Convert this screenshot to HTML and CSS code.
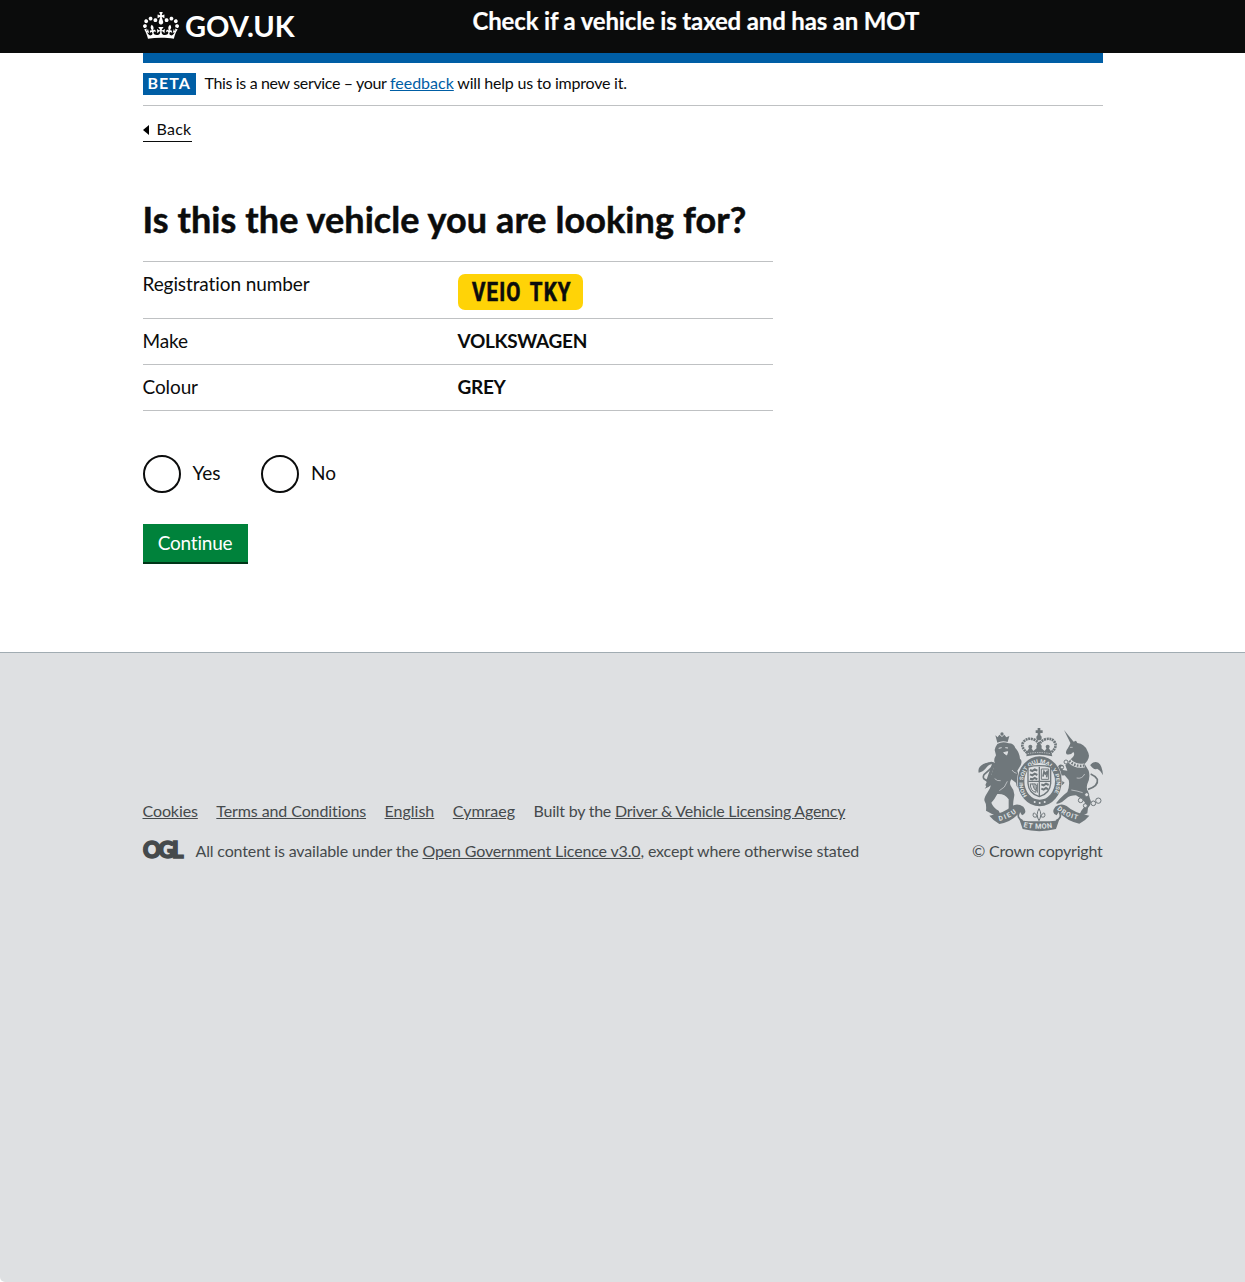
FILE: index.html
```html
<!DOCTYPE html>
<html lang="en">
<head>
<meta charset="utf-8">
<title>Check if a vehicle is taxed and has an MOT</title>
<link rel="stylesheet" href="styles.css">
</head>
<body>
<header class="header">
  <div class="container header-inner">
    <a class="logo" href="#">
      <svg class="logo-crown" viewBox="0 0 132 97" preserveAspectRatio="none" aria-hidden="true"><path fill="currentColor" fill-rule="evenodd" d="M25 30.2c3.5 1.5 7.7-.2 9.1-3.7 1.5-3.6-.2-7.8-3.9-9.2-3.6-1.4-7.6.3-9.1 3.9-1.4 3.5.3 7.5 3.9 9zM9 39.5c3.6 1.5 7.8-.2 9.2-3.7 1.5-3.6-.2-7.8-3.9-9.1-3.6-1.5-7.6.2-9.1 3.8-1.4 3.5.3 7.5 3.8 9zM4.4 57.2c3.5 1.5 7.7-.2 9.1-3.8 1.5-3.6-.2-7.7-3.9-9.1-3.5-1.5-7.6.3-9.1 3.8-1.4 3.5.3 7.6 3.9 9.1zm38.3-21.4c3.5 1.5 7.7-.2 9.1-3.8 1.5-3.6-.2-7.7-3.9-9.1-3.6-1.5-7.6.3-9.1 3.8-1.3 3.6.4 7.7 3.9 9.1zm64.4-5.6c-3.6 1.5-7.8-.2-9.1-3.7-1.5-3.6.2-7.8 3.8-9.2 3.6-1.4 7.7.3 9.2 3.9 1.3 3.5-.4 7.5-3.9 9zm15.9 9.3c-3.6 1.5-7.7-.2-9.1-3.7-1.5-3.6.2-7.8 3.7-9.1 3.6-1.5 7.7.2 9.2 3.8 1.5 3.5-.3 7.5-3.8 9zm4.7 17.7c-3.6 1.5-7.8-.2-9.2-3.8-1.5-3.6.2-7.7 3.9-9.1 3.6-1.5 7.7.3 9.2 3.8 1.3 3.5-.4 7.6-3.9 9.1zM89.3 35.8c-3.6 1.5-7.8-.2-9.2-3.8-1.4-3.6.2-7.7 3.9-9.1 3.6-1.5 7.7.3 9.2 3.8 1.4 3.6-.3 7.7-3.9 9.1zM69.7 17.7l8.9 4.7V9.3l-8.9 2.8c-.2-.3-.5-.6-.9-.9L72.4 0H59.6l3.5 11.2c-.3.3-.6.5-.9.9l-8.8-2.8v13.1l8.8-4.7c.3.3.6.7.9.9l-5 15.4v.1c-.2.8-.4 1.6-.4 2.4 0 4.1 3.1 7.5 7 8.1h.2c.3 0 .7.1 1 .1.4 0 .7 0 1-.1h.2c4-.6 7.1-4.1 7.1-8.1 0-.8-.1-1.7-.4-2.4V34l-5.1-15.4c.4-.2.7-.6 1-.9zM66 92.8c16.9 0 32.8 1.1 47.1 3.2 4-16.9 8.9-26.7 14-33.5l-9.6-3.4c1 4.9 1.1 7.2 0 10.2-1.5-1.4-3-4.3-4.2-8.7L108.6 76c2.8-2 5-3.2 7.5-3.3-4.4 9.4-10 11.9-13.6 11.2-4.3-.8-6.3-4.6-5.6-7.9 1-4.7 5.7-5.9 8-.5 4.3-8.7-3-11.4-7.6-8.8 7.1-7.2 7.9-13.5 2.1-21.1-8 6.1-8.1 12.3-4.5 20.8-4.7-5.4-12.1-2.5-9.5 6.2 3.4-5.2 7.9-2 7.2 3.1-.6 4.3-6.4 7.8-13.5 7.2-10.3-.9-10.9-8-11.2-13.8 2.5-.5 7.1 1.8 11 7.3L80.2 60c-4.1 4.4-8 5.3-12.3 5.4 1.4-4.4 8-11.6 8-11.6H55.5s6.4 7.2 7.9 11.6c-4.2-.1-8-1-12.3-5.4l1.4 16.4c3.9-5.5 8.5-7.7 10.9-7.3-.3 5.8-.9 12.8-11.1 13.8-7.2.6-12.9-2.9-13.5-7.2-.7-5 3.8-8.3 7.1-3.1 2.7-8.7-4.6-11.6-9.4-6.2 3.7-8.5 3.6-14.7-4.6-20.8-5.8 7.6-5 13.9 2.2 21.1-4.7-2.6-11.9.1-7.7 8.8 2.3-5.5 7.1-4.2 8.1.5.7 3.3-1.3 7.1-5.7 7.9-3.5.7-9-1.8-13.5-11.2 2.5.1 4.7 1.3 7.5 3.3l-4.7-15.4c-1.2 4.4-2.7 7.2-4.3 8.7-1.1-3-.9-5.3 0-10.2l-9.5 3.4c5 6.9 9.9 16.7 14 33.5 14.8-2.1 30.8-3.2 47.7-3.2z"/></svg>
      <span class="logo-text">GOV.UK</span>
    </a>
    <a class="service-name" href="#">Check if a vehicle is taxed and has an MOT</a>
  </div>
</header>

<div class="container">
  <div class="header-bar"></div>
  <div class="phase-banner">
    <strong class="phase-tag">BETA</strong>
    <span class="phase-text">This is a new service – your <a class="feedback" href="#">feedback</a><span class="phase-end"> will help us to improve it.</span></span>
  </div>
  <a class="back-link" href="#"><svg class="back-arrow" viewBox="0 0 6 10" aria-hidden="true"><path d="M0 5L6 0V10Z"/></svg>Back</a>

  <main class="main">
    <h1 class="heading">Is this the vehicle you are looking for?</h1>
    <dl class="summary">
      <div class="row row-plate"><dt>Registration number</dt><dd><span class="plate"><span class="plate-text">VEIO TKY</span></span></dd></div>
      <div class="row"><dt>Make</dt><dd>VOLKSWAGEN</dd></div>
      <div class="row"><dt>Colour</dt><dd>GREY</dd></div>
    </dl>
    <form class="form">
      <div class="radios">
        <label class="radio"><input type="radio" name="correct"><span>Yes</span></label>
        <label class="radio"><input type="radio" name="correct"><span>No</span></label>
      </div>
      <button class="button" type="button">Continue</button>
    </form>
  </main>
</div>

<footer class="footer">
  <div class="container footer-inner">
    <div class="footer-meta">
      <ul class="footer-links">
        <li><a class="terms" href="#">Cookies</a></li>
        <li><a class="terms" href="#">Terms and Conditions</a></li>
        <li><a href="#">English</a></li>
        <li><a href="#">Cymraeg</a></li>
        <li class="built">Built by the <a href="#">Driver &amp; Vehicle Licensing Agency</a></li>
      </ul>
      <div class="licence">
        <span class="ogl">OGL</span>
        <span class="licence-text">All content is available under the <a href="#">Open Government Licence v3.0</a>, except where otherwise stated</span>
      </div>
    </div>
    <a class="copyright" href="#">
      <svg class="crest" viewBox="24 24 375 306" aria-hidden="true">
        <defs>
          <path id="garter" d="M171 228A50 60 0 1 1 247 228"/>
          <path id="dieu" d="M88 303Q122 296 152 267"/>
          <path id="mon" d="M160 321Q208 332 256 321"/>
          <path id="droit" d="M260 268Q290 296 334 301"/>
        </defs>
        <!-- lion -->
        <g fill="#6f777b">
          <path d="M76 46l7 6 5-8 8 7 7-7 6 8 9-4-5 18q-16-6-31 2z"/>
          <circle cx="96" cy="42" r="5"/>
          <path d="M82 72Q98 62 116 70Q132 70 136 84Q148 96 150 116Q158 122 152 136L142 152Q148 172 156 190Q158 206 148 204Q138 202 138 188L124 178Q116 190 124 200Q136 214 132 232Q128 252 130 262L138 270Q126 276 116 268L116 238Q104 220 82 222Q74 238 64 248Q70 264 86 272L92 284Q76 288 66 282L48 272Q50 252 44 244Q40 236 52 218Q62 204 62 196Q58 202 44 206Q52 198 46 196Q50 182 64 164Q70 150 74 128Q70 118 78 106L74 90Q76 80 82 72Z"/>
          <path d="M72 128L52 186M80 150L58 192" stroke="#6f777b" stroke-width="9"/>
        </g>
        <path d="M58 182Q34 180 42 164Q58 150 68 140Q76 128 64 128Q44 130 38 148" fill="none" stroke="#6f777b" stroke-width="5"/>
        <path d="M26 158Q22 142 40 132Q56 124 70 132Q58 132 50 142Q40 156 26 158Z" fill="#6f777b"/>
        <path d="M86 85l9-2M106 83l8 1M101 98l12-3-3 10z" stroke="#dee0e2" stroke-width="3" fill="#dee0e2"/>
        <path d="M88 212q18-8 24-28M74 176q8 8 18 6M126 150q4 8 14 10" stroke="#dee0e2" stroke-width="2" fill="none"/>
        <!-- unicorn -->
        <g fill="#6f777b">
          <path d="M282 30L312 67L303 73Z"/>
          <path d="M302 69L318 62L322 69Q344 72 352 92Q362 108 352 122L344 132L356 152Q362 172 352 192Q348 206 354 214L360 236Q368 250 354 264L352 280Q336 290 328 284L334 272L342 262Q350 250 340 242Q328 232 318 226Q300 226 288 236L276 246Q262 254 258 250L268 238Q284 222 292 216Q300 196 296 180L284 166Q266 168 260 156L264 140Q268 130 280 136L278 150L292 152L286 136L302 118Q318 104 310 96Q302 106 290 103Q284 96 294 84Z"/>
          <path d="M264 160l12 6-6 12 14 10-8 8-16-14zM360 136q10-14 25-8 12 8 14 38-8-16-18-20-8 6-20-10z"/>
        </g>
        <path d="M354 208Q386 198 382 178Q376 168 362 162" fill="none" stroke="#6f777b" stroke-width="5"/>
        <path d="M298 122Q316 142 344 136" fill="none" stroke="#dee0e2" stroke-width="12"/>
        <path d="M298 122Q316 142 344 136" fill="none" stroke="#6f777b" stroke-width="7" stroke-dasharray="5 4"/>
        <path d="M300 82l8 0M320 174q16 4 24-12M304 210q16 2 34 8" stroke="#dee0e2" stroke-width="2" fill="none"/>
        <g fill="#dee0e2" stroke="#6f777b" stroke-width="3">
          <circle cx="288" cy="126" r="6"/><circle cx="276" cy="142" r="5"/><circle cx="350" cy="224" r="6"/><circle cx="332" cy="241" r="7"/><circle cx="346" cy="257" r="6"/><circle cx="370" cy="250" r="7"/><circle cx="385" cy="242" r="8"/>
        </g>
        <!-- royal crown -->
        <g fill="none" stroke="#6f777b">
          <path d="M172 99Q150 80 160 66Q172 52 190 58Q204 62 207 76Q212 62 226 58Q246 52 255 68Q262 82 242 99" stroke-width="8" stroke-dasharray="6 2"/>
          <path d="M207 24V58M197 35H218" stroke-width="8"/>
          <path d="M207 70V98" stroke-width="6"/>
        </g>
        <g fill="#6f777b">
          <circle cx="207" cy="53" r="8"/><path d="M171 94l10-14 9 13 17-14 17 14 9-13 10 14 4 15q-40-9-78 0z"/>
          <circle cx="181" cy="80" r="6"/><circle cx="233" cy="80" r="6"/><circle cx="207" cy="80" r="8"/>
        </g>
        <path d="M173 101q34-7 68 0" fill="none" stroke="#dee0e2" stroke-width="2" stroke-dasharray="4 3"/>
        <!-- garter and shield -->
        <ellipse cx="209" cy="184" rx="68" ry="77" fill="#dee0e2"/>
        <ellipse cx="209" cy="184" rx="56" ry="65" fill="none" stroke="#6f777b" stroke-width="20"/>
        <text class="crest-text garter-text"><textPath href="#garter" textLength="244" lengthAdjust="spacingAndGlyphs">HONI SOIT QUI MAL Y PENSE</textPath></text>
        <path d="M174 141Q208 133 242 141V190Q240 220 208 230Q176 220 174 190Z" fill="#dee0e2" stroke="#6f777b" stroke-width="4"/>
        <g fill="none" stroke="#6f777b">
          <path d="M208 140V228M175 184H241" stroke-width="4"/>
          <path d="M180 150l7 3 7-5 8 4M180 163l7 3 7-5 8 4M180 176l7 2 7-4 8 4M214 193l7 3 7-5 8 4M214 206l7 3 7-5 6 4" stroke-width="6"/>
          <path d="M214 147H236V178H214Z" stroke-width="3"/>
          <path d="M219 170l3-15 4 7 7-10-3 20" stroke-width="5"/>
          <path d="M181 191q0 22 16 26M188 191q1 16 12 22M195 190v20M202 190v28M181 192q14-3 20 5l-4 20" stroke-width="3"/>
        </g>
        <circle cx="194" cy="246" r="3" fill="#dee0e2"/><circle cx="209" cy="249" r="3" fill="#dee0e2"/><circle cx="224" cy="246" r="3" fill="#dee0e2"/>
        <!-- motto ribbon -->
        <path d="M58 287Q102 280 126 258Q142 248 160 260Q174 278 156 286L150 276Q126 306 88 312Q70 302 58 287Z" fill="#6f777b"/>
        <path d="M358 287Q314 280 290 258Q274 248 256 260Q242 278 260 286L266 276Q292 304 328 311Q346 302 358 287Z" fill="#6f777b"/>
        <path d="M148 298Q158 304 176 304L240 304Q258 304 268 298L258 327Q208 340 158 327Z" fill="#6f777b"/>
        <path d="M148 276Q138 294 158 302M268 276Q278 294 258 302" fill="none" stroke="#6f777b" stroke-width="5"/>
        <path d="M207 266Q196 284 207 302Q218 284 207 266ZM202 290Q186 296 190 280Q196 276 203 292ZM212 290Q228 296 224 280Q218 276 211 292Z" fill="#dee0e2" stroke="#6f777b" stroke-width="3"/>
        <text class="crest-text"><textPath href="#dieu" textLength="58">DIEU</textPath></text>
        <text class="crest-text mon-text"><textPath href="#mon" textLength="88">ET MON</textPath></text>
        <text class="crest-text"><textPath href="#droit" textLength="70">DROIT</textPath></text>
      </svg>
      <span>© Crown copyright</span>
    </a>
  </div>
</footer>
</body>
</html>
```
FILE: styles.css
```css
* { box-sizing: border-box; }
html { background: #fff; }
body {
  margin: 0;
  min-height: 100vh;
  display: flex;
  flex-direction: column;
  background: #fff;
  color: #0b0c0c;
  font-family: Lato, "Noto Sans", sans-serif;
  font-size: 16px;
  line-height: 20px;
  font-variant-ligatures: none;
}
.container { width: 960px; margin: 0 auto; }

.header { background: #0b0c0c; height: 53px; }
.header-inner { display: flex; align-items: flex-start; }
.header a { color: #fff; text-decoration: none; font-weight: 700; }
.logo { display: flex; width: 330px; padding-top: 11px; }
.logo-crown { width: 36px; height: 27px; margin: 1px 0 0 0.5px; }
.logo-text { margin-left: 6px; font-size: 29px; line-height: 30px; }
.service-name { padding-top: 6px; font-size: 24px; line-height: 30px; letter-spacing: -0.16px; -webkit-text-stroke: 0.2px #fff; }
.header-bar { height: 10px; background: #005ea5; }

.phase-banner { display: flex; height: 43px; padding-top: 10px; border-bottom: 1px solid #bfc1c3; }
.phase-tag {
  width: 53px; height: 22px; padding-left: 5px; margin-right: 9px;
  background: #005ea5; color: #fff; letter-spacing: 1px; line-height: 20px;
}
.phase-text { line-height: 20px; letter-spacing: -0.35px; }
.feedback { color: #005ea5; letter-spacing: 0; }
.phase-end { letter-spacing: -0.22px; }
.back-link {
  display: flex; align-items: center; width: 49px; height: 23px; margin-top: 13px; padding-bottom: 2px;
  border-bottom: 1px solid #0b0c0c; color: #0b0c0c; text-decoration: none; letter-spacing: 0.25px;
}
.back-arrow { width: 6px; height: 10px; margin: 1px 8px 0 0; flex: none; }

.main { width: 630px; padding-top: 55px; height: 510px; }
.heading { margin: 0; font-size: 36px; line-height: 45px; letter-spacing: 0.08px; -webkit-text-stroke: 0.5px #0b0c0c; }
.summary { margin: 19px 0 0; border-top: 1px solid #bfc1c3; font-size: 19px; line-height: 25px; }
.row { display: grid; grid-template-columns: 315px 1fr; height: 46px; padding-top: 9px; border-bottom: 1px solid #bfc1c3; letter-spacing: -0.1px; }
.row-plate { height: 57px; }
.row dd { margin: 0; font-weight: 700; letter-spacing: -0.3px; }
.plate {
  display: flex; width: 125px; height: 36px; margin-top: 3px; padding-left: 14px;
  align-items: center; background: #ffd307; border-radius: 7px;
}
.plate-text {
  font-family: Roboto, sans-serif; font-size: 25px; white-space: nowrap;
  letter-spacing: 1.4px; word-spacing: 3px; transform: scaleX(0.82); transform-origin: 0 50%;
  -webkit-text-stroke: 0.6px #0b0c0c;
}
.form { padding-top: 44px; font-size: 19px; }
.radios { display: flex; gap: 40.5px; }
.radio { display: flex; }
.radio input { appearance: none; width: 38px; height: 38px; margin: 0 12px 0 0; border: 2px solid #0b0c0c; border-radius: 50%; background: #fff; }
.radio span { line-height: 35px; }
.button {
  display: block; width: 105px; height: 38px; margin-top: 31px; padding: 0; border: 0;
  background: #00823b; box-shadow: 0 2px 0 #003618; color: #fff;
  font: inherit; line-height: 38px; letter-spacing: -0.2px;
}

.footer { flex: 1; border-top: 1px solid #a1acb2; background: #dee0e2; border-bottom-left-radius: 5px; }
.footer, .footer a { color: #454a4c; }
.footer-inner { display: flex; justify-content: space-between; padding-top: 75px; }
.footer-meta { padding-top: 73px; }
.footer-links { display: flex; gap: 18.5px; margin: 0; padding: 0; list-style: none; white-space: nowrap; }
.terms { letter-spacing: -0.1px; }
.built { letter-spacing: -0.24px; }
.licence { display: flex; margin-top: 20px; letter-spacing: -0.15px; }
.ogl { width: 53px; padding-left: 0.5px; font: 900 22px/17px Lato, sans-serif; letter-spacing: -2.4px; -webkit-text-stroke: 1.6px #454a4c; }
.copyright { display: flex; flex-direction: column; align-items: flex-end; letter-spacing: -0.22px; }
.footer .copyright { text-decoration: none; }
.crest { width: 125px; height: 102px; margin-bottom: 11px; overflow: visible; }
.crest-text { fill: #dee0e2; font: 700 20px Roboto, sans-serif; letter-spacing: 0; }
.garter-text { font-size: 16px; }
.mon-text { font-size: 22px; }
```
